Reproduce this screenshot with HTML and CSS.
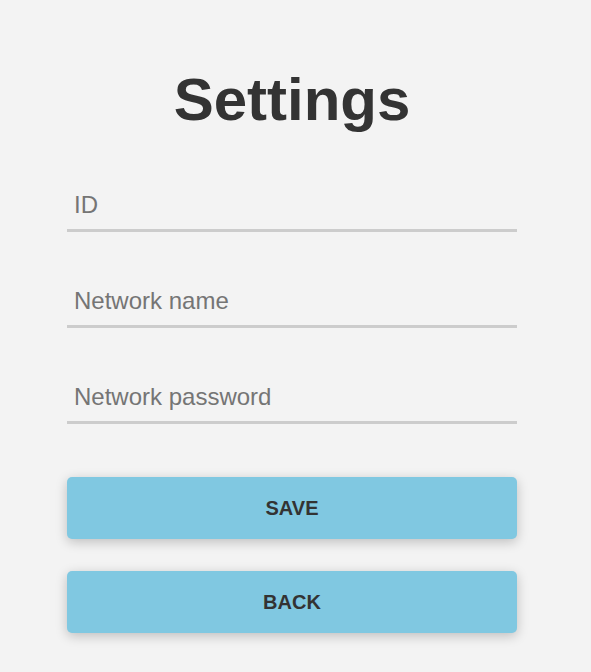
FILE: index.html
```html
<!DOCTYPE html>
<html lang="en">
<head>
<meta charset="utf-8">
<title>Settings</title>
<link rel="stylesheet" href="styles.css">
</head>
<body>
<div class="page">
  <form class="settings">
    <h1 class="title">Settings</h1>
    <input class="field" type="text" placeholder="ID">
    <input class="field" type="text" placeholder="Network name">
    <input class="field" type="password" placeholder="Network password">
    <div class="actions">
      <button class="btn" type="button">SAVE</button>
      <button class="btn" type="button">BACK</button>
    </div>
  </form>
</div>
</body>
</html>
```
FILE: styles.css
```css
html, body {
  margin: 0;
  padding: 0;
  background: #f3f3f3;
}
body {
  font-family: "Liberation Sans", Arial, sans-serif;
  color: #333;
}
.page {
  width: 584px;
  padding-bottom: 38px;
}
.settings {
  width: 450px;
  margin: 0 auto;
  display: flex;
  flex-direction: column;
}
.title {
  margin: 66px 0 46px;
  height: 68px;
  line-height: 68px;
  font-size: 60px;
  font-weight: bold;
  text-align: center;
  color: #333;
}
.field {
  display: block;
  box-sizing: border-box;
  width: 100%;
  height: 52px;
  margin: 0 0 44px;
  padding: 0 7px;
  border: none;
  border-bottom: 3px solid #cccccc;
  background: transparent;
  font-family: "Liberation Sans", Arial, sans-serif;
  font-size: 24px;
  color: #333;
  outline: none;
}
.field::placeholder {
  color: #757575;
}
.field:last-of-type {
  margin-bottom: 0;
}
.actions {
  margin-top: 53px;
  display: flex;
  flex-direction: column;
  gap: 32px;
}
.btn {
  height: 62px;
  border: none;
  border-radius: 5px;
  background: #80c8e1;
  box-shadow: 0 3px 12px rgba(0, 0, 0, 0.22);
  font-family: "Liberation Sans", Arial, sans-serif;
  font-size: 20px;
  font-weight: bold;
  color: #333;
  cursor: pointer;
}
```
